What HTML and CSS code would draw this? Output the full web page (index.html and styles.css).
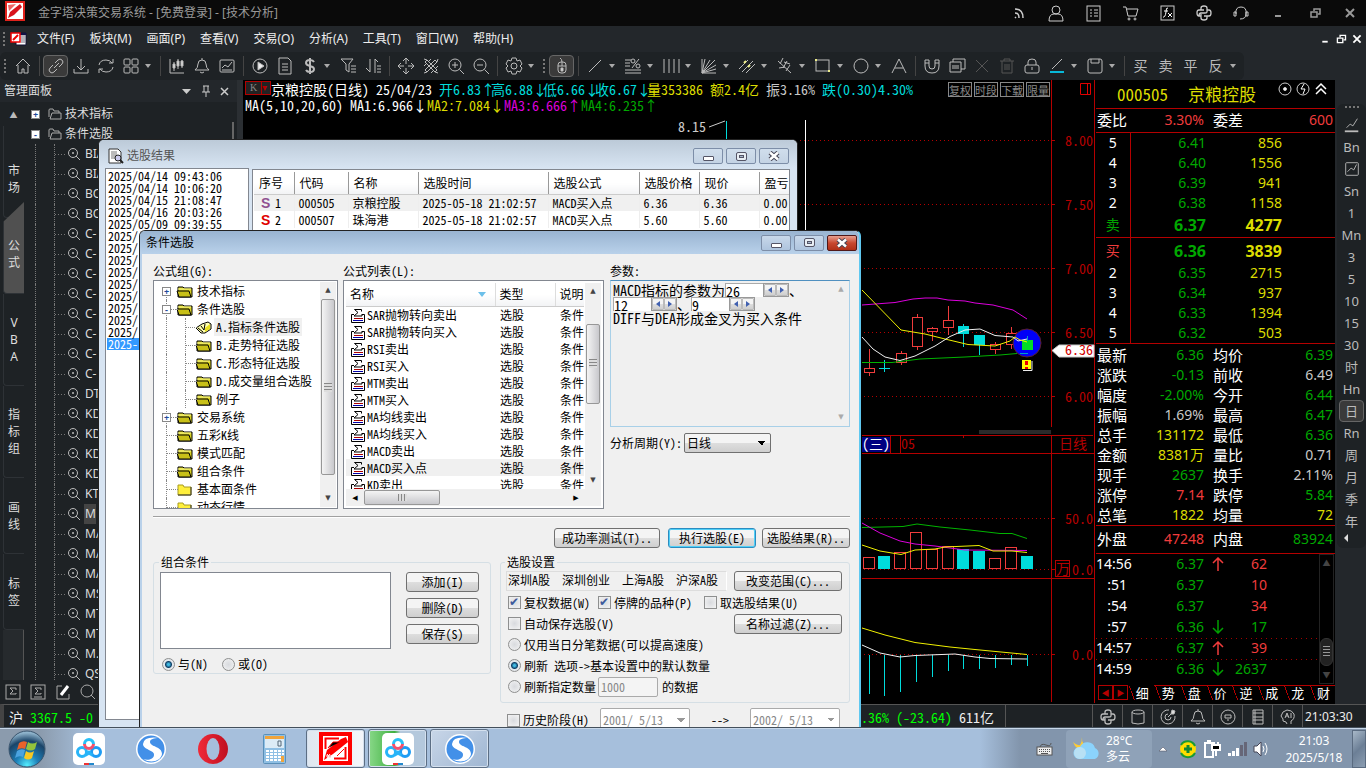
FILE: index.html
```html
<!DOCTYPE html>
<html lang="zh-CN">
<head>
  <meta charset="UTF-8" />
  <meta name="viewport" content="width=device-width, initial-scale=1.0"/>
  <title>金字塔决策交易系统</title>
  <link rel="stylesheet" href="styles.css">
</head>
<body>
  <div class="desktop">
    <header class="titlebar">
      <svg class="logo" viewBox="0 0 20 20"><rect width="20" height="20" fill="#e0221c"/><rect x="2" y="2" width="16" height="16" fill="#fff"/><path d="M3 4L11 3 4 10Z" fill="#e66"/><path d="M15 3l2 3-8 8-6 3 2-6z" fill="#d8141c"/><path d="M12 16l5-6v6z" fill="#fff"/></svg>
      <h1>金字塔决策交易系统 - [免费登录] - [技术分析]</h1>
      <div class="title-icons" id="title-icons"></div>
    </header>

    <nav class="menubar">
      <span class="grip"></span>
      <svg class="doc-logo" viewBox="0 0 17 14"><path d="M6 1h10v12H6z" fill="#fff" stroke="#113"/><path d="M11 4h4M11 6h4M11 8h4M11 10h4" stroke="#667"/><path d="M6 1h10v2H6z" fill="#114"/><path d="M1 1h9v9H1z" fill="#fff" stroke="#e00" stroke-width="1.500"/><path d="M3 8l5-5" stroke="#e00" stroke-width="2"/></svg>
      <a href="#">文件(F)</a>
      <a href="#">板块(M)</a>
      <a href="#">画面(P)</a>
      <a href="#">查看(V)</a>
      <a href="#">交易(O)</a>
      <a href="#">分析(A)</a>
      <a href="#">工具(T)</a>
      <a href="#">窗口(W)</a>
      <a href="#">帮助(H)</a>
      <div class="child-controls" id="child-controls"></div>
    </nav>

    <div class="toolbar" id="toolbar"></div>

    <main class="workspace">
      <aside class="manager">
        <div class="manager-head">
          <h2>管理面板</h2>
          <svg width="52" height="14" viewBox="0 0 52 14"><path d="M1 5h9l-4.500 5z" fill="#ccc"/><path d="M22 2h6M23 2v6M27 2v6M21 8h8M25 8v5" stroke="#ccc" fill="none"/><path d="M40 4l7 7M47 4l-7 7" stroke="#ccc" stroke-width="1.500"/></svg>
        </div>
        <div class="manager-body">
          <div class="side-tabs">
            <div class="side-up">▲</div>
            <div class="side-tab first">市<br>场</div>
            <div class="side-tab active">公<br>式</div>
            <div class="side-tab">V<br>B<br>A</div>
            <div class="side-tab">指<br>标<br>组</div>
            <div class="side-tab low">画<br>线</div>
            <div class="side-tab low">标<br>签</div>
            <div class="side-rest"></div>
          </div>
          <ul class="dark-tree" id="dark-tree"></ul>
          <div class="dark-scroll"></div>
        </div>
        <div class="manager-tools" id="manager-tools"></div>
      </aside>

      <section class="chart">
        <div class="chart-info"><span class="k-box">K<i>▾</i></span><span>京粮控股(日线) 25/04/23 </span><span class="cyan">开6.83<b>↑</b>高6.88<b>↓</b>低6.66<b>↓</b>收6.67<b>↓</b></span><span class="yellow">量353386 额2.4亿 </span><span class="grey">振3.16% </span><span class="cyan">跌(0.30)4.30%</span></div>
        <div class="chart-info second"><span>MA(5,10,20,60) MA1:6.966↓</span><span class="yellow">MA2:7.084↓</span><span class="magenta">MA3:6.666↑</span><span class="green">MA4:6.235↑</span></div>
        <div class="chart-buttons"><button>复权</button><button>时段</button><button>下载</button><button>限量</button></div>
        <svg class="plot" id="plot" width="852" height="625" viewBox="243 80 852 625"></svg>
      </section>

      <section class="quote">
        <div class="quote-head">
          <span>000505</span><span>京粮控股</span>
          <svg width="50" height="14" viewBox="0 0 50 14" fill="none" stroke="#ccc"><circle cx="7" cy="7" r="6"/><circle cx="7" cy="7" r="1.500" fill="#fff"/><circle cx="25" cy="7" r="6"/><path d="M26 2l-3 5h4l-2 5" stroke="#fff"/><path d="M38 7l5-5 5 5M38 12l5-5 5 5" stroke="#fff" stroke-width="1.500"/></svg>
        </div>
        <table class="stats ratio"><tr><th>委比</th><td class="red">3.30%</td><th>委差</th><td class="red">600</td></tr></table>
        <table class="orders" id="asks"></table>
        <table class="orders" id="bids"></table>
        <table class="stats" id="stats"></table>
        <table class="stats volume"><tr><th>外盘</th><td class="red">47248</td><th>内盘</th><td class="green">83924</td></tr></table>
        <div class="ticks-wrap">
          <table class="ticks" id="ticks"></table>
          <div class="ticks-scroll"><span>▲</span><i></i><span>▼</span></div>
        </div>
        <div class="quote-tabs"><button class="arrow">◀</button><button class="arrow">▶</button><a href="#" class="on">细</a><a href="#">势</a><a href="#">盘</a><a href="#">价</a><a href="#">逆</a><a href="#">成</a><a href="#">龙</a><a href="#">财</a></div>
      </section>

      <aside class="periods"><div class="period-list" id="periods"></div></aside>
    </main>

    <footer class="statusbar">
      <div class="index-left"><span>沪</span> 3367.5 -0</div>
      <div class="index-right">.36% (-23.64) <span>611亿</span></div>
      <div class="status-gap"></div>
      <div class="status-icons" id="status-icons"></div>
      <div class="status-time">21:03:30</div>
    </footer>

    <!-- result window -->
    <section class="window results">
      <div class="win-title">
        <svg width="16" height="16" viewBox="0 0 16 16"><path d="M1 1h9l3 3v11H1z" fill="#fff" stroke="#333"/><path d="M3 3h6v8H3z" fill="#bbb"/><circle cx="10" cy="10" r="3" fill="#cce" stroke="#222"/><path d="M12 12l3 3" stroke="#222" stroke-width="2"/></svg>
        <h2>选股结果</h2>
        <div class="win-buttons"><button aria-label="最小化"><i class="min"></i></button><button aria-label="最大化"><i class="max"></i></button><button aria-label="关闭"><svg width="12" height="10"><use href="#i-x"/></svg></button></div>
      </div>
      <div class="results-body">
        <ul class="history" id="history"></ul>
        <div class="result-box">
          <table class="result-table">
            <thead><tr><th>序号</th><th>代码</th><th>名称</th><th>选股时间</th><th>选股公式</th><th>选股价格</th><th>现价</th><th>盈亏</th></tr></thead>
            <tbody>
              <tr class="sel"><td><b class="s1">S</b>1</td><td>000505</td><td>京粮控股</td><td>2025-05-18 21:02:57</td><td>MACD买入点</td><td>6.36</td><td>6.36</td><td>0.00</td></tr>
              <tr><td><b class="s2">S</b>2</td><td>000507</td><td>珠海港</td><td>2025-05-18 21:02:57</td><td>MACD买入点</td><td>5.60</td><td>5.60</td><td>0.00</td></tr>
            </tbody>
          </table>
        </div>
      </div>
    </section>

    <!-- condition dialog -->
    <section class="window dialog">
      <div class="win-title">
        <h2>条件选股</h2>
        <div class="win-buttons"><button aria-label="最小化"><i class="min"></i></button><button aria-label="最大化" disabled><i class="max"></i></button><button aria-label="关闭" class="close"><svg width="12" height="10"><use href="#i-x"/></svg></button></div>
      </div>
      <div class="dialog-body">
        <div class="pickers">
          <div>
            <div class="caption">公式组(G):</div>
            <div class="group-box">
              <ul class="group-tree" id="group-tree"></ul>
              <div class="vscroll"><span>▲</span><i class="thumb tall"></i><span>▼</span></div>
            </div>
          </div>
          <div>
            <div class="caption">公式列表(L):</div>
            <div class="formula-box">
              <div class="formula-main">
                <table class="formula-table">
                  <thead><tr><th>名称<svg width="10" height="5" viewBox="0 0 10 5"><path d="M0 0h8L4 5z" fill="#6cc0ea"/></svg></th><th>类型</th><th>说明</th></tr></thead>
                  <tbody id="formulas"></tbody>
                </table>
                <div class="vscroll"><span>▲</span><i class="thumb mid"></i><span>▼</span></div>
              </div>
              <div class="hscroll"><span>◀</span><i class="thumb"></i><span>▶</span></div>
            </div>
          </div>
          <div class="param-col">
            <div class="caption">参数:</div>
            <div class="param-box">
              <div class="param-text">
                <div>MACD指标的参数为<input value="26" aria-label="长周期"><span class="spin"><button aria-label="减"><svg width="4" height="6"><path d="M4 0v6L0 3z"/></svg></button><button aria-label="加"><svg width="4" height="6"><path d="M0 0v6l4-3z"/></svg></button></span>、</div>
                <div><input value="12" aria-label="短周期"><span class="spin"><button aria-label="减"><svg width="4" height="6"><path d="M4 0v6L0 3z"/></svg></button><button aria-label="加"><svg width="4" height="6"><path d="M0 0v6l4-3z"/></svg></button></span>、<input value="9" aria-label="平滑周期"><span class="spin"><button aria-label="减"><svg width="4" height="6"><path d="M4 0v6L0 3z"/></svg></button><button aria-label="加"><svg width="4" height="6"><path d="M0 0v6l4-3z"/></svg></button></span></div>
                <div>DIFF与DEA形成金叉为买入条件</div>
              </div>
              <div class="vscroll faint"><span>▲</span><span>▼</span></div>
            </div>
            <div class="period-row">
              <label for="period">分析周期(Y):</label>
              <select id="period"><option>日线</option></select>
            </div>
          </div>
        </div>

        <hr>

        <div class="actions">
          <button class="wide">成功率测试(T)..</button>
          <button class="primary">执行选股(E)</button>
          <button>选股结果(R)..</button>
        </div>

        <div class="lower">
          <fieldset class="combo-set">
            <legend>组合条件</legend>
            <div class="combo-row">
              <textarea aria-label="组合条件"></textarea>
              <div class="combo-buttons"><button>添加(I)</button><button>删除(D)</button><button>保存(S)</button></div>
            </div>
            <div class="radio-row">
              <label><input type="radio" name="logic" checked>与(N)</label>
              <label><input type="radio" name="logic">或(O)</label>
            </div>
          </fieldset>

          <div class="settings">
            <fieldset>
              <legend>选股设置</legend>
              <div class="set-row first"><div class="markets">深圳A股&nbsp; 深圳创业&nbsp; 上海A股&nbsp; 沪深A股</div><button>改变范围(C)...</button></div>
              <div class="set-row">
                <label class="w90"><input type="checkbox" checked>复权数据(W)</label>
                <label class="w106"><input type="checkbox" checked>停牌的品种(P)</label>
                <label><input type="checkbox">取选股结果(U)</label>
              </div>
              <div class="set-row spread"><label><input type="checkbox">自动保存选股(V)</label><button>名称过滤(Z)...</button></div>
              <div class="set-row"><label><input type="radio" name="src">仅用当日分笔数据(可以提高速度)</label></div>
              <div class="set-row"><label><input type="radio" name="src" checked>刷新 选项-&gt;基本设置中的默认数量</label></div>
              <div class="set-row"><label><input type="radio" name="src">刷新指定数量</label><input class="count" value="1000" aria-label="数量" disabled><span>的数据</span></div>
            </fieldset>
            <div class="dates">
              <label><input type="checkbox">历史阶段(H)</label>
              <select disabled aria-label="开始日期"><option>2001/ 5/13</option></select>
              <span>--&gt;</span>
              <select disabled aria-label="结束日期"><option>2002/ 5/13</option></select>
            </div>
          </div>
        </div>
      </div>
    </section>
  </div>

  <div class="taskbar">
    <button class="task start" aria-label="开始">
      <svg width="38" height="38" viewBox="0 0 38 38"><defs><radialGradient id="orb" cx=".5" cy=".95" r=".9"><stop offset="0" stop-color="#5ef"/><stop offset=".35" stop-color="#1d7fb8"/><stop offset=".75" stop-color="#1b4468"/><stop offset="1" stop-color="#8fb4cc"/></radialGradient></defs><circle cx="19" cy="19" r="18" fill="url(#orb)" stroke="#3b556e"/><path d="M11 13q4-3 8-1l-2 7q-4-2-8 1z" fill="#e8622a"/><path d="M20 12q4 3 9 0l-2 7q-4 3-9 0z" fill="#93c23c"/><path d="M9 21q4-3 8-1l-2 7q-4-2-8 1z" fill="#4ba3e0"/><path d="M18 21q4 3 8 0l-2 7q-4 3-8 0z" fill="#f8c822"/></svg>
    </button>
    <button class="task" aria-label="网盘"><svg width="32" height="32"><use href="#i-pan"/></svg></button>
    <button class="task" aria-label="搜狗浏览器"><svg width="32" height="32"><use href="#i-sogou"/></svg></button>
    <button class="task" aria-label="Opera"><svg width="32" height="32" viewBox="0 0 32 32"><defs><linearGradient id="op" x2="1"><stop offset="0" stop-color="#f02a38"/><stop offset="1" stop-color="#c01020"/></linearGradient></defs><ellipse cx="16" cy="16" rx="15" ry="15" fill="url(#op)"/><ellipse cx="16" cy="16" rx="6.500" ry="11" fill="#a6bfdc"/></svg></button>
    <button class="task" aria-label="计算器"><svg width="24" height="30" viewBox="0 0 24 30"><rect x=".5" y=".5" width="22" height="29" rx="1" fill="#8fbfe4" stroke="#5a8fb8"/><path d="M2 2h19v3H2z" fill="#f0a43c"/><path d="M2 5h19v9H2z" fill="#dcebf6"/><path d="M15 7h3v5h-3z" fill="none" stroke="#567"/><path d="M3 17h18M3 20h18M3 23h18M3 26h18" stroke="#fff" stroke-width="2" stroke-dasharray="3 1"/><path d="M18 22h3v6h-3z" fill="#f0a43c"/></svg></button>
    <div class="running">
      <button class="task-open current" aria-label="金字塔"><svg width="33" height="33" viewBox="0 0 33 33"><rect width="33" height="33" fill="#f00"/><rect x="4" y="4" width="25" height="25" fill="#fff"/><path d="M6.500 17V6.500H20M15 26.500h11.500V15" stroke="#f00" stroke-width="2" fill="none"/><path d="M27 5l2 5-15 12-9 6 3-10L22 7z" fill="#f00"/><path d="M9 16l5-6h7M25 17l-7 7M7 24h5M8 22l3 4M11 22l-3 4" stroke="#f00"/><path d="M7 24h5M8 22l3 4M11 22l-3 4" stroke="#fff"/></svg></button>
      <button class="task-open green-bg" aria-label="网盘"><svg width="32" height="32"><use href="#i-pan"/></svg></button>
      <button class="task-open" aria-label="搜狗浏览器"><svg width="32" height="32"><use href="#i-sogou"/></svg></button>
    </div>
    <svg class="keyboard" width="17" height="16" viewBox="0 0 17 16" fill="none" stroke="#555"><path d="M4 6q1-4 6-2t5-2"/><rect x="1" y="6" width="15" height="8" fill="#eee"/><path d="M3 8.500h11M3 10.500h11" stroke-dasharray="1 1"/><path d="M5 12.500h7"/></svg>
    <div class="weather">
      <svg width="32" height="28" viewBox="0 0 32 28"><path d="M11 2q-1 8 8 10l-6 4q-8-1-11-9 4 4 7 3 2-3 2-8z" fill="#fc3"/><path d="M8 24a6 6 0 0 1 1-12 8 8 0 0 1 15 1 6 6 0 0 1 0 11z" fill="#8bd3fc"/><circle cx="9" cy="18" r="6" fill="#b8e0f4"/></svg>
      <div>28°C<br>多云</div>
    </div>
    <div class="tray">
      <svg width="110" height="20" viewBox="0 0 110 20"><path d="M0 12h8L4 8z" fill="#fff" stroke="#445" stroke-width=".5"/><circle cx="29" cy="10" r="8" fill="#fd0"/><path d="M22 6a8 8 0 0 1 14 1M36 14a8 8 0 0 1-14 0" stroke="#1a9a34" stroke-width="2" fill="none"/><path d="M25 10h8M29 6v8" stroke="#183" stroke-width="3"/><path d="M46 4h8v14h-8zM48 2h4" stroke="#fff" stroke-width="2" fill="none"/><path d="M53 6h8v5h-8zM55 3v3M59 3v3M57 11v6" stroke="#fff" stroke-width="2"/><path d="M70.500 17v-3M74.500 17v-5M78.500 17v-8" stroke="#fff" stroke-width="3"/><path d="M82.500 17V6M86.500 17V3" stroke="#667" stroke-width="3"/><path d="M95 7h3l4-4v14l-4-4h-3z" fill="#fff" stroke="#445"/><path d="M104 7q2 3 0 6M106 4q4 6 0 12" stroke="#fff" fill="none"/></svg>
    </div>
    <div class="clock">21:03<br>2025/5/18</div>
    <button class="peek" aria-label="显示桌面"></button>
  </div>

  <svg class="sprite" width="0" height="0">
    <symbol id="i-pan" viewBox="0 0 32 32"><rect width="32" height="32" rx="5" fill="#fff"/><g fill="none" stroke-width="3"><circle cx="9" cy="19" r="4.500" stroke="#28b4f8"/><circle cx="23" cy="19" r="4.500" stroke="#1e9cf4"/><path d="M12.500 22q3-1 4-4M19.500 22q-3-1-4-4" stroke="#28b4f8"/><path d="M11.500 11a4.500 4.500 0 0 1 9 0" stroke="#28c0f8"/><path d="M20.500 11a4.500 4.500 0 0 1-9 0" stroke="#f4506c"/></g><path d="M11 31h5" stroke="#e33" stroke-width="2"/><path d="M16 31h5" stroke="#28c" stroke-width="2"/></symbol>
    <symbol id="i-sogou" viewBox="0 0 32 32"><circle cx="16" cy="16" r="15" fill="#fff"/><circle cx="16" cy="16" r="13.500" fill="#4390e8"/><path d="M24 5Q9 3 8 11c0 6 12 6 11 11 0 4-6 6-11 4 8 5 18 2 19-5 0-8-12-7-12-12 0-3 4-4 9-4z" fill="#fff"/></symbol>
    <symbol id="i-folder" viewBox="0 0 17 13"><path d="M2 2h5l1 1h8v9H2z" fill="#d8d020" stroke="#000"/><path d="M1 6h12l2 6H3z" fill="#c8c018" stroke="#000"/><path d="M2 4h13" stroke="#ff9"/></symbol>
    <symbol id="i-folder-open" viewBox="0 0 17 13"><path d="M1 7l6-4 6-2 3 2v5l-6 4H6z" fill="#ffffb0" stroke="#000"/><path d="M3 7l5 4M6 5l3 4M10 3l-1 6" stroke="#000" fill="none"/><path d="M10 7l5-4v5l-5 3z" fill="#e8e020"/></symbol>
    <symbol id="i-folder-plain" viewBox="0 0 17 13"><path d="M2 2h5l1 2h7v8H2z" fill="#ffef3c" stroke="#a89c20"/><path d="M2 12h13V4" stroke="#333" fill="none"/></symbol>
    <symbol id="i-formula" viewBox="0 0 14 14"><path d="M3 5.500H.5v8h13v-8H11" fill="#fff" stroke="#000"/><path d="M10.500 2.500v-2h-7L7 3.500l-4 3.500h8V5" fill="none" stroke="#000"/><path d="M3 9.500h9" stroke="#a00"/><path d="M2 11.500h10" stroke="#00a"/></symbol>
    <symbol id="i-x" viewBox="0 0 12 10"><path d="M2 1.500l8 7M10 1.500l-8 7" stroke="#445" stroke-width="4.500"/><path d="M2 1.500l8 7M10 1.500l-8 7" stroke="#fff" stroke-width="2.500"/></symbol>
  </svg>

  <script>
    const $ = id => document.getElementById(id);

    // 20x20 line icons
    const icons = {
      home: '<path d="M3 10l7-7 7 7M5 9v8h4v-4h2v4h4V9"/>',
      link: '<path d="M8 12l5-5M9 7l3-3q2-2 4 0t0 4l-3 3M11 13l-3 3q-2 2-4 0t0-4l3-3"/>',
      download: '<path d="M10 3v10M6 10l4 4 4-4M3 13v4h14v-4"/>',
      refresh: '<path d="M3 9q1-5 7-5 4 0 6 3M17 3v4h-4M17 11q-1 5-7 5-4 0-6-3M3 17v-4h4"/>',
      grid: '<rect x="3" y="3" width="6" height="6" rx="1"/><rect x="11" y="3" width="6" height="6" rx="1"/><rect x="3" y="11" width="6" height="6" rx="1"/><rect x="11" y="11" width="6" height="6" rx="1"/>',
      candles: '<path d="M3 3v14h14M7 6v9M11 3v10M15 4v8"/><path d="M6 8h2v4H6zM10 5h2v5h-2zM14 5h2v5h-2z" fill="#ddd"/>',
      bell: '<path d="M3 14q3-2 3-6 0-4 4-4t4 4q0 4 3 6zM10 2v2M8 16q2 2 4 0"/>',
      chart: '<rect x="3" y="4" width="14" height="12" rx="1"/><path d="M5 12l3-3 3 2 4-5M5 14h10"/>',
      play: '<circle cx="10" cy="10" r="7"/><path d="M8 6l6 4-6 4z" fill="#eee"/>',
      doc: '<path d="M4 2h9l3 3v13H4zM7 8h6M7 11h6M7 14h6"/>',
      dollar: '<path d="M14 6q-1-2-4-2-4 0-4 3 0 2 4 3t4 3q0 3-4 3-3 0-4-2M10 2v16" stroke-width="2"/>',
      filter: '<path d="M3 3h12l-4 5v8l-3-2V8zM13 10h5M13 13h5M13 16h5"/>',
      sort: '<path d="M7 3v13l-4-4M12 17V3l3 3M14 10h4M14 13h4M14 16h4"/>',
      move: '<path d="M10 2v16M2 10h16M7 5l3-3 3 3M7 15l3 3 3-3M5 7l-3 3 3 3M15 7l3 3-3 3"/><path d="M8 8h4v4H8z" fill="#1f2326" stroke="none"/>',
      pattern: '<path d="M4 6l2-2 10 10-2 2zM14 4l2 2L6 16l-2-2zM3 3l3 1M17 3l-1 3M3 17l3-1M17 17l-3-1M3 10l3-3M10 3L7 6M10 17l3-3M17 10l-3 3"/>',
      zoomin: '<circle cx="9" cy="9" r="6"/><path d="M13.500 13.500L18 18M6 9h6M9 6v6"/>',
      zoomout: '<circle cx="9" cy="9" r="6"/><path d="M13.500 13.500L18 18M6 9h6"/>',
      gear: '<path d="M8 2h4l1 3 3-1 2 4-2 2 2 2-2 4-3-1-1 3H8l-1-3-3 1-2-4 2-2-2-2 2-4 3 1z"/><circle cx="10" cy="10" r="3"/>',
      mouse: '<rect x="6" y="6" width="8" height="11" rx="3"/><path d="M6 10h8M10 6v4M10 6q0-3-2-4" /><path d="M9 12h2v3H9z" fill="#ddd"/>',
      line: '<path d="M4 16L16 4"/>',
      percent: '<path d="M2 4h6M2 7h5M2 10h5M2 14h16M2 17h16M9 12l7-9"/><circle cx="10" cy="5" r="2"/><circle cx="15" cy="10" r="2"/>',
      vert: '<path d="M3 3v14M8 3v14M13 3v14M18 3v14"/>',
      fan: '<path d="M3 3v14h14M3 17L6 3M3 17l8-13M3 17L16 4M3 17l14-8M3 17l14-4"/>',
      parallels: '<path d="M2 13L11 4M5 16L16 5M9 17l9-9"/><path d="M7 7l2-2M11 11l2-2" stroke="#ee8" stroke-width="2"/>',
      fork: '<path d="M3 5l13 12M8 2L5 8M12 5l-4 7M15 9l-4 6M4 12l6-1M9 6l6 2"/>',
      rect: '<rect x="3" y="4" width="13" height="11"/><path d="M2 3h2v2H2zM15 14h2v2h-2z" fill="#ee8" stroke="none"/>',
      circle: '<circle cx="10" cy="10" r="7"/>',
      letter: '<path d="M3 17L10 3l7 14M6 12h8"/>',
      magnet: '<path d="M3 4h4v6q0 3 3 3t3-3V4h4v6q0 7-7 7t-7-7zM3 7h4M13 7h4"/>',
      copy: '<path d="M6 6V3h12v10h-4M3 6h11v10H3zM5 10h7M5 12h7"/>',
      cross: '<path d="M4 4l12 12M16 4L4 16"/>',
      trash: '<path d="M3 5h14M7 5V3h6v2M5 5v12h10V5M8 8v6M10 8v6M12 8v6"/>',
      lock: '<rect x="3" y="9" width="14" height="8" rx="2"/><path d="M6 9V6q0-3 4-3t4 3v3M10 11v3"/>',
      pen: '<path d="M5 13L15 3"/><path d="M3 16h14" stroke="#08b8d8" stroke-width="2"/>',
      save: '<rect x="3" y="3" width="14" height="14" rx="2"/><path d="M6 3v4h8V3"/>',
      rss: '<path d="M6 6q8 0 8 9M6 10q4 0 4 5M6 14l1 1" stroke-width="1.500"/>',
      user: '<circle cx="10" cy="7" r="4"/><path d="M3 18q0-7 5-7h4q5 0 5 7z"/>',
      news: '<rect x="4" y="3" width="13" height="15"/><path d="M7 7h2M11 7h4M7 10h2M11 10h4M7 13h2M11 13h4"/>',
      cart: '<path d="M3 4h3l2 9h8l2-7H7"/><circle cx="9" cy="16" r="1"/><circle cx="15" cy="16" r="1"/>',
      fx: '<rect x="4" y="3" width="13" height="14"/><path d="M11 5q-2-1-2 4-1 6-3 5M7 8h4M11 10l4 4M15 10l-4 4" stroke="#fff"/>',
      python: '<path d="M7 7V5q0-2 3-2t3 2v4q0 1-2 1H7q-2 0-2 3M7 13H5q-2 0-2-3t2-3h5M13 7h2q2 0 2 3t-2 3h-5M7 11v4q0 2 3 2t3-2v-2" stroke-width="1.300"/>',
      headset: '<path d="M5 11q-1-7 5-7t5 7q0 5-6 5"/><path d="M3 9h2v4H3zM15 9h2v4h-2z"/>',
      min: '<path d="M7 13h6" stroke-width="2"/>',
      restore: '<path d="M6 9h6v5H6zM9 8V6h6v5h-2" stroke-width="1.500"/>',
      close: '<path d="M6 6l8 8M14 6l-8 8" stroke-width="2"/>',
      sigma: '<rect x="3" y="3" width="14" height="14"/><path d="M13 8V6H7l3 3-3 3h6v-1"/>',
      sigma2: '<rect x="3" y="3" width="14" height="14"/><path d="M13 8V6H7l3 3-3 3h6v-1M6 15h8"/>',
      edit: '<path d="M9 4H4v13h12v-5"/><path d="M8 13l7-9" stroke="#fff" stroke-width="3"/>',
      search: '<circle cx="9" cy="9" r="6"/><path d="M13 13l4 4"/>',
      db: '<path d="M4 5v11q6 2 12 0V5"/><ellipse cx="10" cy="5" rx="6" ry="2"/>',
      radar: '<path d="M11 3a7 7 0 1 0 6 6M10 7a3 3 0 1 0 3 3M10 10l5-5"/><path d="M14 3l3 1-1 3-3 0z" fill="#ddd"/>',
      chip: '<circle cx="10" cy="10" r="7"/><path d="M7 8h6v3H7zM9 13h2"/>',
      rack: '<path d="M5 3h10v14H5zM5 6h10M5 10h10M5 13h10M7 3v14"/>',
      ai: '<path d="M13 17v-3q4-2 3-7-2-4-7-4-5 1-6 6l2 3v2l3 1 1 2M7 11l2-5 2 5M8 9h2M13 6v5"/>',
      trend: '<path d="M4 13l4-4 3 2 5-8"/><path d="M2 17h15" stroke-width="2"/>',
      trendbox: '<rect x="3" y="3" width="14" height="14" rx="1"/><path d="M5 13l4-4 3 2 3-6"/>'
    };
    const icon = (name, size = 20) =>
      `<svg width="${size}" height="${size}" viewBox="0 0 20 20" fill="none" stroke="currentColor">${icons[name]}</svg>`;
    const iconButtons = (id, names, size) => {
      $(id).innerHTML = names.map(n => `<button aria-label="${n}">${icon(n, size)}</button>`).join('');
    };

    iconButtons('title-icons', ['rss', 'user', 'news', 'cart', 'fx', 'python', 'headset', 'min', 'restore', 'close']);
    iconButtons('child-controls', ['min', 'restore', 'close'], 18);
    iconButtons('manager-tools', ['sigma', 'sigma2', 'edit', 'search']);
    iconButtons('status-icons', ['python', 'db', 'radar', 'bell', 'chip', 'rack', 'ai']);

    // "|" separator, "v" caret, ":" grip, "*" marks a pressed button, "-" a disabled one
    const tools = ': home | *link download refresh grid v | candles bell chart | play doc dollar v filter sort | ' +
      'move pattern zoomin zoomout | gear v : *mouse | line v percent v vert v fan v parallels v fork v rect v circle v letter | ' +
      'magnet copy -cross -trash lock pen v save v | 买 卖 平 反 v';
    $('toolbar').innerHTML = '<div class="toolbar-inner">' + tools.split(' ').map(t => {
      if (t === '|') return '<span class="sep"></span>';
      if (t === 'v') return '<span class="caret"></span>';
      if (t === ':') return '<span class="grip"></span>';
      const cls = t[0] === '*' ? 'pressed' : t[0] === '-' ? 'dim' : '';
      const name = t.replace(/[*-]/, '');
      return `<button class="${cls}" aria-label="${name}">${icons[name] ? icon(name) : name}</button>`;
    }).join('') + '</div>';

    const zoomIcon = '<svg width="14" height="14" viewBox="0 0 14 14" fill="none" stroke="#bbb"><circle cx="6" cy="6" r="4.500"/><path d="M9 9l4 4M5 6h2M6 5v2"/></svg>';
    const darkFolder = '<svg width="14" height="12" viewBox="0 0 14 12" fill="none" stroke="#aaa"><path d="M1 9V2q0-1 1-1h3l1 2h5v2M2 11l2-6h9v6z"/></svg>';
    const darkItems = 'BIA BIA BO BO C- C- C- C- C- C- C- C- DT KD KD KD KD KT M MA MA MA MS MT MT M. QS'.split(' ');
    $('dark-tree').innerHTML =
      `<li class="root"><i class="box">+</i>${darkFolder}<span>技术指标</span></li>` +
      `<li class="root"><i class="box">-</i>${darkFolder}<span>条件选股</span></li>` +
      darkItems.map((t, i) => `<li class="leaf">${zoomIcon}<span class="${i === 18 ? 'hl' : ''}">${t}</span></li>`).join('');

    // quote panel
    const order = (n, price, vol, cls = '') => `<tr class="${cls}"><th>${n}</th><td>${price}</td><td>${vol}</td></tr>`;
    $('asks').innerHTML = order(5, '6.41', 856) + order(4, '6.40', 1556) + order(3, '6.39', 941) + order(2, '6.38', 1158) + order('卖', '6.37', 4277, 'best ask');
    $('bids').innerHTML = order('买', '6.36', 3839, 'best bid') + order(2, '6.35', 2715) + order(3, '6.34', 937) + order(4, '6.33', 1394) + order(5, '6.32', 503);

    const stats = [
      ['最新', '6.36', 'green', '均价', '6.39', 'green'],
      ['涨跌', '-0.13', 'green', '前收', '6.49', 'grey'],
      ['幅度', '-2.00%', 'green', '今开', '6.44', 'green'],
      ['振幅', '1.69%', 'grey', '最高', '6.47', 'green'],
      ['总手', '131172', 'yellow', '最低', '6.36', 'green'],
      ['金额', '8381万', 'yellow', '量比', '0.71', 'grey'],
      ['现手', '2637', 'green', '换手', '2.11%', 'grey'],
      ['涨停', '7.14', 'red', '跌停', '5.84', 'green'],
      ['总笔', '1822', 'yellow', '均量', '72', 'yellow']
    ];
    $('stats').innerHTML = stats.map(s =>
      `<tr><th>${s[0]}</th><td class="${s[2]}">${s[1]}</td><th>${s[3]}</th><td class="${s[5]}">${s[4]}</td></tr>`).join('');

    const up = '<svg width="12" height="14" viewBox="0 0 12 14" fill="none" stroke="#f03c3c"><path d="M6 14V1M1 6l5-5 5 5" stroke-width="1.500"/></svg>';
    const down = '<svg width="12" height="14" viewBox="0 0 12 14" fill="none" stroke="#00a000"><path d="M6 0v13M1 8l5 5 5-5" stroke-width="1.500"/></svg>';
    const ticks = [['14:56', '6.37', up, 62, 'red'], [':51', '6.37', '', 10, 'red'], [':54', '6.37', '', 34, 'red'],
      [':57', '6.36', down, 17, 'green'], ['14:57', '6.37', up, 39, 'red'], ['14:59', '6.36', down, 2637, 'green']];
    $('ticks').innerHTML = ticks.map(t =>
      `<tr><td>${t[0]}</td><td class="green">${t[1]}</td><td>${t[2]}</td><td class="${t[4]}">${t[3]}</td></tr>`).join('');

    $('periods').innerHTML = '<span class="dots"></span>' +
      ['trend', 'Bn', 'trendbox', 'Sn', '1', 'Mn', '3', '5', '10', '15', '30', '时', 'Hn', '日', 'Rn', '周', '月', '季', '年']
        .map(p => `<button class="${p === '日' ? 'pressed' : ''}">${icons[p] ? icon(p, 18) : p}</button>`).join('') + '<span class="back"></span>';

    // result history
    const past = ['2025/04/14 09:43:06', '2025/04/14 10:06:20', '2025/04/15 21:08:47', '2025/04/16 20:03:26', '2025/05/09 09:39:55'];
    for (let i = 0; i < 9; i++) past.push('2025/');
    past.push('2025-');
    $('history').innerHTML = past.map((p, i) => `<li class="${i === 14 ? 'on' : ''}">${p}</li>`).join('');

    // formula groups: [level, expander, icon, text]
    const groups = [
      [0, '+', 'folder', '技术指标'], [0, '-', 'folder', '条件选股'],
      [1, '', 'folder-open', 'A.指标条件选股'], [1, '', 'folder', 'B.走势特征选股'], [1, '', 'folder', 'C.形态特征选股'],
      [1, '', 'folder', 'D.成交量组合选股'], [1, '', 'folder', '例子'],
      [0, '+', 'folder', '交易系统'], [0, '', 'folder', '五彩K线'], [0, '', 'folder', '模式匹配'], [0, '', 'folder', '组合条件'],
      [0, '', 'folder-plain', '基本面条件'], [0, '', 'folder-plain', '动态行情']
    ];
    $('group-tree').innerHTML = groups.map((g, i) =>
      `<li class="level${g[0]}">${g[1] ? `<i class="box">${g[1]}</i>` : ''}<svg width="17" height="13"><use href="#i-${g[2]}"/></svg><span class="${i === 2 ? 'hl' : ''}">${g[3]}</span></li>`).join('');

    const formulas = ['SAR抛物转向卖出', 'SAR抛物转向买入', 'RSI卖出', 'RSI买入', 'MTM卖出', 'MTM买入', 'MA均线卖出', 'MA均线买入', 'MACD卖出', 'MACD买入点', 'KD卖出'];
    $('formulas').innerHTML = formulas.map((f, i) =>
      `<tr class="${i === 9 ? 'sel' : ''}"><td><svg width="14" height="14"><use href="#i-formula"/></svg>${f}</td><td>选股</td><td>条件</td></tr>`).join('');

    // chart
    const line = (x1, y1, x2, y2, c, extra = '') => `<path d="M${x1} ${y1}L${x2} ${y2}" stroke="${c}" ${extra}/>`;
    const poly = (pts, c) => `<polyline points="${pts}" fill="none" stroke="${c}"/>`;
    const text = (x, y, t, c) => `<text x="${x}" y="${y}" fill="${c}">${t}</text>`;
    const RED = '#b40000', CYAN = '#00dcdc';
    let g = '';

    [[140.5, '8.00'], [204.5, '7.50'], [268.5, '7.00'], [332.5, '6.50'], [396.5, '6.00'], [518.5, '50.0'], [569.5, '0.0'], [654.5, '0.0']].forEach(([y, t]) => {
      g += line(800, y, 1051, y, RED, 'stroke-dasharray="1 3"') + line(1051, y, 1055, y, RED) + text(1093 - t.length * 7, y + 5, t, RED);
    });
    g += line(1051.5, 80, 1051.5, 427, RED) + line(1051.5, 436, 1051.5, 702, RED) + line(1094.5, 80, 1094.5, 703, RED);
    g += line(862, 435.5, 1093, 435.5, RED) + line(862, 453.5, 1094, 453.5, RED) + line(862, 578.5, 1094, 578.5, RED);
    g += line(900.5, 436, 900.5, 453, RED) + line(963.5, 436, 963.5, 438, RED) + line(890.5, 436, 890.5, 453, RED);
    g += '<rect x="979" y="430" width="72" height="4" fill="#2a2a2a"/><rect x="862" y="437" width="28" height="15" fill="#000080"/>';
    g += text(862, 449, '(三)', '#fff') + text(901, 449, '05', RED) + text(1059, 449, '日线', RED);
    g += '<rect x="1055.500" y="560.500" width="14" height="16" fill="none" stroke="#b40000"/>' + text(1056, 574, '万', RED);
    g += '<path d="M1080.500 83.500h10v11h-10zM1087.500 83.500v11" fill="none" stroke="#e00000"/>';
    g += line(805.5, 120, 805.5, 232, '#fff') + line(726.5, 121, 726.5, 145, CYAN) + text(678, 132, '8.15', '#ccc') + line(709, 127, 725, 121, '#ccc');

    // x, top, bottom, high, low, rising
    const candles = [[869, 368, 373, 349, 376, 1], [884, 368, 369, 360, 372, 0], [901, 353, 363, 351, 365, 1], [917, 317, 347, 314, 350, 1],
      [932, 328, 332, 327, 341, 1], [948, 320, 328, 306, 335, 1], [963, 326, 334, 324, 347, 0], [979, 335, 345, 335, 355, 0],
      [995, 344, 350, 342, 354, 1], [1011, 333, 345, 327, 349, 1]];
    candles.forEach(([x, t, b, hi, lo, rise]) => {
      const c = rise ? '#f03c3c' : CYAN;
      g += line(x + .5, hi, x + .5, lo, c);
      g += b - t < 2 ? line(x - 5, t + .5, x + 6, t + .5, c)
        : `<rect x="${x - 4.5}" y="${t + .5}" width="10" height="${b - t - 1}" fill="${rise ? '#000' : c}" stroke="${c}"/>`;
    });
    g += poly('862,305 895,302.500 913,299 925,298 937,298 948,300 965,301 975,303 993,305 1005,308 1013,310 1027,319', '#dc00dc');
    g += poly('862,290 901,330 925,334 945,339 968,344.500 995,346 1010,341', '#f0f000');
    g += poly('862,362.500 892,362.500 920,359 965,357 1000,355 1017,353.500', '#00b400');
    g += '<circle cx="1027" cy="343" r="14" fill="#0000f8" stroke="#5a2028"/>';
    g += '<rect x="1022" y="340" width="11" height="10" fill="#00dc28"/><path d="M1027.500 336v5M1020 353.500h8" stroke="#00a0c0"/>';
    g += poly('862,337 873,349 885,357 900,360.500 915,356 935,346 950,336.500 965,330 980,329 995,335.500 1013,337 1018,341 1027,339', '#f0f0f0') + poly('1010,341 1015,337 1020,340 1027,342', '#f0f000');
    g += '<path d="M1023 370.500h9V361" fill="none" stroke="#eee"/><rect x="1022" y="360" width="9" height="9" fill="#ff0"/><path d="M1026.500 361v4M1026.500 367v2" stroke="#e00" stroke-width="3"/>';
    g += '<path d="M1052 350.500l7-5.500h35v12h-35z" fill="#fff" stroke="#c8c8c8"/>' + text(1065, 355, '6.36', '#d00000');

    const volumes = [[863, 557, 1], [878, 556, 0], [894, 552, 1], [910, 532, 1], [926, 549, 1], [942, 546, 1], [957, 549, 0], [973, 551, 0], [989, 558, 1], [1005, 547, 1], [1021, 556, 0]];
    volumes.forEach(([x, y, rise]) => {
      g += `<rect x="${x + .5}" y="${y + .5}" width="11" height="${568 - y}" fill="${rise ? '#000' : CYAN}" stroke="${rise ? '#f03c3c' : CYAN}"/>`;
    });
    g += poly('862,527.500 903,526.500 917,524 940,527 970,530 1000,533.500 1012,533.500 1027,538.500', '#00b400');
    g += poly('862,523 880,533 900,541 915,544 935,546 965,550 1027,550.500', '#dc00dc');
    g += poly('862,545 880,551 901,554.500 915,550 935,549 945,547 979,545.500 993,551 1012,551 1027,552.500', '#f0f000');

    [[869, 694], [884, 696], [900, 692], [916, 682], [932, 677], [948, 671], [963, 669], [979, 669], [995, 668], [1011, 665], [1027, 666]]
      .forEach(([x, y]) => { g += line(x + .5, 655, x + .5, y, CYAN); });
    g += poly('862,628 885,635 915,642.500 950,647 980,650 1027,654.500', '#f0f000');
    g += poly('862,645 880,653 900,657 915,655.500 955,654 975,657 990,658.500 1027,659', '#f0f0f0');
    $('plot').innerHTML = g;
  </script>
</body>
</html>
```
FILE: styles.css
```css
* {
  margin: 0;
  padding: 0;
  box-sizing: border-box;
}

:root {
  --song: "Noto Sans Mono CJK SC", "Noto Sans CJK SC", monospace;
  --ui: "Noto Sans", "Noto Sans CJK SC", sans-serif;
}

body {
  height: 100vh;
  display: flex;
  flex-direction: column;
  overflow: hidden;
  background: #000;
  color: #ddd;
  font: 12px/16px var(--ui);
}

h1, h2 { font-size: 12px; font-weight: normal; }
ul { list-style: none; }
a { color: inherit; text-decoration: none; }
i { font-style: normal; }
button, input, select, textarea { font: inherit; color: inherit; }
table { border-collapse: collapse; border-spacing: 0; }
svg { flex: none; }
.sprite { position: absolute; }

.cyan { color: #00dcdc; }
.yellow { color: #dcdc00; }
.grey { color: #c8c8c8; }
.magenta { color: #dc00dc; }
.green { color: #00a800; }
.red { color: #f03c3c; }

.desktop {
  flex: 1;
  min-height: 0;
  position: relative;
  overflow: hidden;
  display: flex;
  flex-direction: column;
}

/* title, menu, toolbar */
.titlebar {
  display: flex;
  align-items: center;
  height: 26px;
  padding: 0 0 0 5px;
  background: #0a0a0a;
}
.logo { width: 20px; height: 20px; margin-bottom: 4px; }
.titlebar h1 { margin-left: 13px; color: #999; }
.title-icons { margin-left: auto; display: flex; color: #ccc; }
.title-icons button {
  width: 37px;
  height: 24px;
  background: none;
  border: none;
  display: grid;
  place-items: center;
}
.title-icons button:nth-last-child(-n+3) { color: #999; }
.title-icons button:last-child { width: 33px; }

.menubar {
  display: flex;
  align-items: center;
  gap: 15px;
  height: 26px;
  padding-left: 3px;
  background: #23272b;
  color: #eee;
}
.grip {
  width: 4px;
  height: 14px;
  border-left: 2px dotted #777;
}
.doc-logo { width: 17px; height: 14px; margin: 0 -5px 0 -12px; }
.child-controls { margin-left: auto; display: flex; padding-right: 2px; color: #fff; }
.child-controls button { border: none; background: none; width: 16px; height: 18px; }

.toolbar { height: 28px; background: #23272b; }
.toolbar-inner {
  display: inline-flex;
  align-items: center;
  height: 28px;
  padding-right: 3px;
  background: #1e2225;
  border-radius: 6px;
  color: #bbb;
}
.toolbar-inner button {
  width: 25px;
  height: 22px;
  display: grid;
  place-items: center;
  background: none;
  border: 1px solid transparent;
  border-radius: 4px;
  font-size: 14px;
}
.toolbar-inner .pressed { background: #3a3a3a; border-color: #666; }
.toolbar-inner .dim { color: #555; }
.toolbar-inner .sep { width: 8px; height: 20px; border-left: 1px solid #444; margin-left: 4px; margin-right: -4px; }
.toolbar-inner .grip { width: 6px; margin-left: 4px; }
.toolbar-inner .caret { width: 13px; height: 4px; }
.toolbar-inner .caret::before {
  content: "";
  display: block;
  width: 0;
  margin-left: 2px;
  border: 3px solid transparent;
  border-top: 4px solid #aaa;
}

/* left panel */
.workspace { flex: 1; min-height: 0; display: flex; }
.manager {
  width: 243px;
  display: flex;
  flex-direction: column;
  background: #1e2225;
  border-right: 6px solid #2b2f33;
}
.manager-head {
  display: flex;
  justify-content: space-between;
  align-items: center;
  height: 22px;
  padding: 0 4px;
  background: #23272b;
  color: #ddd;
}
.manager-body { flex: 1; min-height: 0; display: flex; overflow: hidden; }
.side-tabs {
  width: 24px;
  padding-left: 3px;
  display: flex;
  flex-direction: column;
  text-align: center;
  line-height: 17px;
}
.side-up { height: 24px; font-size: 8px; line-height: 26px; color: #bbb; }
.side-tab {
  height: 92px;
  display: grid;
  place-content: center;
  border: 1px solid #2e3236;
  border-width: 0 0 1px 1px;
  border-radius: 0 0 0 4px;
}
.side-tab.first { padding-top: 14px; }
.side-tab.active {
  margin-top: -16px;
  padding-top: 12px;
  background: #505050;
  clip-path: polygon(0 20px, 100% 0, 100% 100%, 0 100%);
}
.side-tab.low { height: 76px; }
.side-rest { flex: 1; background: #262a2d; border-right: 1px solid #555; }
.dark-tree { flex: 1; padding-top: 2px; }
.dark-tree li { display: flex; align-items: center; height: 20px; }
.box {
  width: 9px;
  height: 9px;
  background: #fff;
  border: 1px solid #888;
  color: #224a9a;
  font: bold 9px/7px var(--ui);
  text-align: center;
}
.dark-tree .root { padding-left: 7px; }
.dark-tree .root svg { margin: 0 3px 0 8px; }
.dark-tree .leaf {
  margin-left: 11px;
  padding-left: 18px;
  border-left: 1px dotted #777;
}
.dark-tree .leaf::before {
  content: "";
  align-self: stretch;
  width: 12px;
  border-left: 1px dotted #777;
  background: repeating-linear-gradient(90deg, #777 0 1px, transparent 1px 3px) center / 100% 1px no-repeat;
}
.dark-tree .leaf svg { margin-right: 3px; }
.dark-tree .leaf span { line-height: 20px; padding-left: 1px; }
.dark-tree .hl { background: #444; }
.dark-scroll { width: 2px; margin: 20px 3px 400px 0; background: #666; }
.manager-tools { display: flex; height: 24px; }
.manager-tools button { width: 25px; background: none; border: none; color: #aaa; display: grid; place-items: center; }

/* chart */
.chart { flex: 1; min-width: 0; position: relative; overflow: hidden; display: flex; justify-content: flex-end; background: #000; font-family: var(--song); }
.chart-info {
  position: absolute;
  left: 2px;
  top: 1px;
  white-space: pre;
  font-size: 14px;
  line-height: 16px;
  color: #fff;
}
.chart-info.second { top: 17px; }
.chart-info b { display: inline-block; width: 10px; font-weight: normal; }
.chart-info .magenta { color: #dc00dc; }
.k-box {
  display: inline-block;
  width: 26px;
  height: 14px;
  padding-left: 4px;
  background: #222;
  border: 1px solid #b40000;
  color: #888;
  font: 10px/12px "Liberation Serif", serif;
  vertical-align: top;
}
.k-box i { float: right; width: 9px; border-left: 1px solid #b40000; color: #b40000; }
.chart-buttons { position: absolute; top: 2px; right: 45px; display: flex; gap: 2px; }
.chart-buttons button {
  width: 24px;
  height: 15px;
  background: none;
  border: 1px solid #888;
  color: #888;
  font-size: 11px;
  line-height: 12px;
}
.plot { font: 14px var(--song); }

/* quote panel */
.quote {
  width: 240px;
  padding: 0 0 0 1px;
  background: #000;
  color: #fff;
}
.quote-head {
  display: flex;
  height: 29px;
  align-items: center;
  gap: 20px;
  padding-left: 21px;
  font: 17px/20px var(--song);
  color: #dcdc00;
  border-bottom: 1px solid #b40000;
}
.quote-head svg { margin: -10px 0 0 2px; }
.quote table { width: 100%; table-layout: fixed; font-size: 14px; line-height: 20px; }
.quote tr { height: 20px; }
.quote th { font-weight: normal; }
.quote td { text-align: right; }
.stats th { width: 32px; text-align: left; font-size: 15px; padding-left: 1px; }
.stats th:nth-child(3) { width: 39px; padding-left: 9px; }
.stats td:nth-child(2) { width: 76px; }
.stats td:last-child { padding-right: 2px; }
.quote .ratio tr { height: 23px; }
.ratio, .volume, #asks, #bids, #stats { border-bottom: 1px solid #b40000; }
#stats { margin-top: 1px; }
.quote .volume tr { height: 27px; }
.orders th { width: 34px; border-right: 1px solid #b40000; }
.orders td:nth-child(2) { width: 76px; color: #00a800; }
.orders td:nth-child(3) { padding-right: 53px; color: #dcdc00; }
.orders .best { height: 25px; font-size: 16px; font-weight: bold; }
.orders .best th { font-size: 14px; }
.orders .ask th { color: #00a800; }
.orders .bid th { color: #f03c3c; }
.ticks-wrap { display: flex; align-items: flex-start; height: 130px; }
.quote .ticks { width: 223px; }
.quote .ticks tr { height: 21px; }
.ticks td:nth-child(1) { width: 31px; }
.ticks td:nth-child(2) { width: 77px; }
.ticks td:nth-child(3) { width: 20px; }
.ticks td:nth-child(4) { padding-right: 52px; }
.ticks svg { display: block; margin-left: auto; }
.ticks tr:nth-child(n+5) { background: repeating-linear-gradient(90deg, #a00000 0 1px, transparent 1px 5px) top / 100% 1px no-repeat; }
.ticks-scroll {
  width: 15px;
  height: 130px;
  display: flex;
  flex-direction: column;
  justify-content: space-between;
  border: 1px solid #222;
  color: #444;
  font-size: 8px;
  text-align: center;
}
.ticks-scroll i {
  height: 28px;
  margin-top: 66px;
  border: 1px solid #333;
  border-radius: 6px;
  background: repeating-linear-gradient(#999 0 1px, #222 1px 3px) center / 7px 12px no-repeat, #222;
}
.quote-tabs { display: flex; align-items: center; height: 18px; padding-left: 2px; }
.quote-tabs .arrow { width: 15px; height: 15px; background: #000; border: 1px solid #b40000; color: #b40000; font-size: 8px; line-height: 12px; }
.quote-tabs a {
  width: 26px;
  height: 15px;
  padding-left: 8px;
  border-top: 1px solid #b40000;
  background: linear-gradient(70deg, transparent 47%, #b40000 47% 54%, transparent 54%) left / 8px 15px no-repeat;
  font-size: 13px;
  line-height: 15px;
}
.quote-tabs .on { border-top-color: transparent; }

/* right periods */
.periods { width: 31px; background: #23272b; padding: 24px 0 0 2px; }
.period-list {
  display: flex;
  flex-direction: column;
  align-items: center;
  padding-top: 2px;
  background: #1e2225;
  border-radius: 6px;
}
.period-list button {
  width: 25px;
  height: 22px;
  display: grid;
  place-items: center;
  background: none;
  border: 1px solid transparent;
  border-radius: 4px;
  color: #bbb;
  font-size: 13px;
}
.period-list .pressed { background: #3a3a3a; border-color: #666; }
.dots { width: 14px; height: 8px; border-top: 2px dotted #777; }
.back { margin: 2px 0 6px -12px; border: 4px solid transparent; border-right: 4px solid #ddd; border-left: none; }

/* status bar */
.statusbar {
  display: flex;
  align-items: stretch;
  height: 24px;
  background: #1e2225;
  border-top: 1px solid #555;
  border-left: 4px solid #444;
  font: 14px/24px var(--song);
  color: #0f0;
}
.statusbar span { color: #eee; }
.index-left { padding-left: 5px; flex: 1; }
.index-right { padding-right: 11px; border-right: 1px solid #555; }
.status-gap { width: 86px; }
.status-icons { display: flex; color: #bbb; }
.status-icons button { width: 30px; border: none; border-left: 1px solid #555; background: none; display: grid; place-items: center; }
.status-time { width: 64px; padding-left: 2px; border-left: 1px solid #555; color: #eee; font: 12px/23px var(--ui); }

/* windows */
.window { position: absolute; color: #000; border: 1px solid #222; border-radius: 6px 6px 0 0; font: 12px/16px var(--song); }
.win-title { display: flex; align-items: center; }
.win-title h2 { font-family: var(--ui); }
.win-buttons { margin-left: auto; display: flex; gap: 3px; }
.win-buttons button {
  width: 30px;
  height: 16px;
  display: grid;
  place-items: center;
  border: 1px solid #7d8ea8;
  border-radius: 2px;
  background: linear-gradient(#c8d8ea, #aec4de);
}
.win-buttons .close { background: linear-gradient(#e8a090, #c84830 50%, #b03018); border-color: #501818; }
.min { width: 11px; height: 5px; margin-top: 5px; background: #fff; border: 1px solid #556; border-radius: 1px; }
.max { width: 9px; height: 7px; background: #a8b8cc; border: 2px solid #e8eef4; outline: 1px solid #556; border-radius: 1px; box-shadow: inset 0 0 0 1px #556; }

.results {
  left: 98px;
  top: 139px;
  width: 700px;
  height: 589px;
  display: flex;
  flex-direction: column;
  padding: 0 7px 7px 6px;
  background: #d7e4f2;
}
.results .win-title {
  height: 28px;
  margin: 0 -7px 0 -6px;
  padding: 4px 8px 0 9px;
  border-radius: 5px 5px 0 0;
  background: linear-gradient(#bccad8, #d7e4f2);
  color: #555;
}
.results h2 { margin-left: 3px; }
.results .win-buttons button { background: linear-gradient(#d0deec, #c4d3e4); }
.results-body { flex: 1; display: flex; gap: 3px; }
.history { width: 144px; background: #fff; border: 1px solid #828790; padding: 1px; }
.history li { line-height: 12px; padding-left: 1px; }
.history .on { background: #3399ff; color: #fff; }
.result-box { flex: 1; overflow: hidden; background: #fff; border: 1px solid #828790; padding: 2px 0 0 1px; margin-top: 1px; }
.result-table { table-layout: fixed; width: 620px; }
.result-table th {
  height: 22px;
  padding-left: 5px;
  background: linear-gradient(#fff 50%, #f2f3f5);
  border-right: 1px solid #999;
  border-bottom: 1px solid #ccc;
  text-align: left;
  font: 12px var(--ui);
}
.result-table td { height: 17px; padding-left: 4px; border-right: 1px solid #eee; line-height: 16px; white-space: nowrap; }
.result-table th:nth-child(1) { width: 40px; }
.result-table th:nth-child(2) { width: 54px; }
.result-table th:nth-child(3) { width: 70px; }
.result-table th:nth-child(4) { width: 130px; }
.result-table th:nth-child(5) { width: 91px; }
.result-table th:nth-child(6), .result-table th:nth-child(7) { width: 60px; }
.result-table td:first-child { padding-left: 7px; }
.result-table b { display: inline-block; width: 14px; font: bold 14px/14px "Liberation Sans", sans-serif; }
.sel td { background: #f0f0f0; }
.s1 { color: #905090; }
.s2 { color: #e00000; }

.dialog {
  left: 139px;
  top: 230px;
  width: 722px;
  background: #f0f0f0;
  border-right: 2px solid #60c8f0;
  border-left-color: #222;
  box-shadow: inset 2px 0 #b9d1ea;
}
.dialog .win-title {
  height: 23px;
  padding: 0 2px 0 6px;
  border-radius: 5px 5px 0 0;
  background: linear-gradient(#99b4d1, #b9d1ea);
}
.dialog-body { padding: 8px 9px 0 13px; }
.dialog-body button {
  height: 20px;
  background: linear-gradient(#f4f4f4 50%, #dedede 50%, #cfcfcf);
  border: 1px solid #707070;
  border-radius: 3px;
  line-height: 16px;
  white-space: nowrap;
}
.pickers { display: grid; grid-template-columns: 185px 261px 1fr; gap: 5px; }
.caption { height: 18px; line-height: 18px; }
.group-box, .formula-box { height: 229px; background: #fff; border: 1px solid #828790; }
.group-box { display: flex; overflow: hidden; padding: 1px; }
.group-tree { flex: 1; white-space: nowrap; }
.group-tree li { display: flex; align-items: center; height: 18px; position: relative; }
.group-tree .level0 { padding-left: 21px; }
.group-tree .level1 { padding-left: 40px; }
.group-tree .box { position: absolute; left: 7px; z-index: 1; }
.group-tree li::before, .group-tree .level1::after {
  content: "";
  position: absolute;
  left: 11px;
  top: 0;
  height: 18px;
  width: 11px;
  border-left: 1px dotted #888;
  background: repeating-linear-gradient(90deg, #888 0 1px, transparent 1px 2px) center / 100% 1px no-repeat;
}
.group-tree li:first-child::before { top: 9px; height: 9px; background: none; }
.group-tree .level1::before { background: none; }
.group-tree .level1::after { left: 30px; }
.group-tree span { margin-left: 2px; padding: 0 2px; line-height: 18px; }
.group-tree .hl { background: #f0f0f0; }

.vscroll {
  width: 16px;
  display: flex;
  flex-direction: column;
  align-items: center;
  justify-content: space-between;
  background: #f0f0f0;
  color: #444;
  font: 7px/17px "DejaVu Sans", sans-serif;
}
.thumb { border: 1px solid #979797; border-radius: 2px; }
.vscroll .thumb {
  width: 14px;
  background: repeating-linear-gradient(#888 0 1px, #ddd 1px 3px) center / 8px 9px no-repeat, linear-gradient(90deg, #f4f4f4, #c8c8cc);
}
.tall { height: 176px; margin-bottom: 15px; }
.mid { height: 80px; margin-bottom: 45px; }
.faint { color: #aaa; }

.formula-box { padding: 2px; display: flex; flex-direction: column; }
.formula-main { display: flex; height: 207px; overflow: hidden; }
.formula-table { width: 238px; table-layout: fixed; }
.formula-main .vscroll { margin-left: auto; }
.formula-table th {
  height: 23px;
  padding-left: 4px;
  border-right: 1px solid #ddd;
  border-bottom: 1px solid #ccc;
  background: linear-gradient(#fff 50%, #f2f3f5);
  text-align: left;
  font-weight: normal;
}
.formula-table th svg { float: right; margin: 6px 7px 0 0; }
.formula-table th:nth-child(1) { width: 149px; }
.formula-table th:nth-child(2) { width: 60px; }
.formula-table th:nth-child(3) { border-right: none; }
.formula-table td { height: 17px; padding-left: 5px; overflow: hidden; white-space: nowrap; line-height: 16px; }
.formula-table td svg { margin-right: 2px; vertical-align: -3px; }
.hscroll { display: flex; align-items: center; height: 17px; background: #f0f0f0; font: 7px/16px "DejaVu Sans", sans-serif; }
.hscroll span { width: 18px; text-align: center; }
.hscroll span:last-child { margin: 0 16px 0 auto; }
.hscroll .thumb {
  width: 76px;
  height: 15px;
  background: repeating-linear-gradient(90deg, #888 0 1px, #ddd 1px 3px) center / 9px 7px no-repeat, linear-gradient(#f4f4f4, #c8c8cc);
}

.param-col { padding-left: 1px; }
.param-box { display: flex; width: 240px; height: 147px; border: 1px solid #a8d0e8; border-top-color: #5090c0; }
.param-text { flex: 1; padding: 2px 0 0 2px; font-size: 14px; line-height: 14px; white-space: nowrap; }
.param-text div { display: flex; height: 14px; }
.param-text input { width: 38px; height: 14px; border: 1px solid #aaa; border-width: 1px 0 0 1px; background: #fff; line-height: 13px; }
.spin { display: flex; border: 1px solid #999; height: 14px; }
.spin button { width: 12px; height: 12px; display: grid; place-items: center; border: 1px solid #bbb; border-radius: 1px; }
.spin svg { fill: #4060b0; }
.period-row { display: flex; align-items: center; gap: 2px; margin-top: 6px; }
select {
  appearance: none;
  height: 20px;
  border: 1px solid #707070;
  border-radius: 2px;
  padding: 0 2px;
}
#period {
  width: 87px;
  background: linear-gradient(45deg, transparent 50%, #000 50%) right 8px center / 4px 4px no-repeat, linear-gradient(-45deg, transparent 50%, #000 50%) right 4px center / 4px 4px no-repeat, linear-gradient(#f4f4f4 50%, #dedede 50%, #cfcfcf);
}

hr { border: none; border-top: 1px solid #a0a0a0; border-bottom: 1px solid #fff; margin: 7px 0 10px; }
.actions { display: flex; justify-content: flex-end; gap: 6px; }
.actions button { width: 88px; overflow: hidden; }
.actions .wide { width: 106px; margin-right: 2px; }
.dialog-body .primary { border-color: #2c8cc0; box-shadow: inset 0 0 0 1px #50d0f8; }
.lower { display: flex; justify-content: space-between; margin-top: 6px; }
fieldset { border: 1px solid #d5dfe5; border-radius: 3px; padding: 0 6px; }
legend { padding: 0 2px; margin-left: -1px; }
.combo-set { width: 338px; height: 120px; }
.combo-row { display: flex; gap: 15px; padding-top: 2px; }
textarea { width: 231px; height: 77px; border: 1px solid #828790; background: #fff; resize: none; }
.combo-buttons { display: flex; flex-direction: column; gap: 6px; }
.combo-buttons button { width: 73px; }
.radio-row { display: flex; gap: 14px; margin-top: 7px; padding-left: 2px; }
.dialog label { display: inline-flex; align-items: center; }
input[type="radio"], input[type="checkbox"] {
  appearance: none;
  width: 13px;
  height: 13px;
  margin-right: 3px;
  border: 1px solid #8e8f8f;
  background: radial-gradient(#d8dade, #f4f4f4);
}
input[type="radio"] { border-radius: 50%; }
input[type="radio"]:checked { background: radial-gradient(#40b8e0 0 1px, #104068 3px, #e4e8ec 4px); }
input[type="checkbox"]:checked::before {
  content: "✔";
  display: block;
  font: 12px/11px "DejaVu Sans", sans-serif;
  color: #3c5a9c;
}
.settings { width: 350px; }
.settings fieldset { height: 149px; padding: 0 7px 0 5px; }
.settings fieldset button { width: 108px; }
.set-row { display: flex; align-items: center; height: 21px; padding-left: 2px; }
.set-row.first { height: 22px; padding: 0; justify-content: space-between; }
.set-row.spread { justify-content: space-between; }
.markets { width: 221px; height: 20px; padding-left: 1px; border: 1px solid #ddd; border-right-color: #fff; white-space: pre; }
.w90 { width: 90px; }
.w106 { width: 106px; }
.count { width: 60px; height: 20px; margin: 0 4px 0 2px; padding-left: 2px; border: 1px solid #aaa; border-radius: 2px; background: #f4f4f4; color: #888; }
.dates { display: flex; align-items: center; margin-top: 5px; padding-left: 7px; white-space: nowrap; }
.dates label { width: 93px; }
.dates select { width: 90px; height: 24px; border-color: #aaa; color: #888; background: linear-gradient(45deg, transparent 50%, #999 50%) right 8px center / 4px 4px no-repeat, linear-gradient(-45deg, transparent 50%, #999 50%) right 4px center / 4px 4px no-repeat, #fff; opacity: 1; }
.dates span { width: 60px; text-align: center; }

/* taskbar */
.taskbar {
  display: flex;
  align-items: center;
  height: 40px;
  border-top: 1px solid #c8d8ea;
  box-shadow: 0 -1px #44505c;
  background: linear-gradient(90deg, #8b9bad, #8b9bad 40px, #a6bfdc 90px, #a6bfdc 980px, #8295ac 1020px);
  color: #fff;
  z-index: 1;
}
.task { width: 62px; height: 38px; display: grid; place-items: center; background: none; border: none; }
.task.start { width: 58px; padding-right: 4px; }
.running { display: flex; gap: 3px; flex: 1; }
.task-open {
  width: 59px;
  height: 39px;
  display: grid;
  place-items: center;
  border: 1px solid #5c6e84;
  border-radius: 3px;
  background: linear-gradient(135deg, #c8d6e8, #9fb6d2);
  box-shadow: inset 0 0 0 1px #d4e0ee;
}
.task-open.current { background: linear-gradient(90deg, #dfe7f0, #f4f6fa); }
.task-open.green-bg { background: linear-gradient(90deg, #88d888, #40b040 45%, #b4c8dc 55%); }
.keyboard { margin-right: 13px; }
.weather {
  display: flex;
  align-items: center;
  gap: 3px;
  width: 86px;
  height: 38px;
  padding-left: 5px;
  background: #8fa2b8;
  border-radius: 4px;
}
.tray { margin-left: 7px; }
.tray svg { display: block; }
.clock { width: 84px; text-align: center; line-height: 17px; margin-right: -4px; margin-left: 3px; }
.peek { width: 14px; height: 38px; border: 1px solid #5a6b80; background: linear-gradient(135deg, #a8b8c8, #6c7f96 50%, #8c9eb2); }
```
